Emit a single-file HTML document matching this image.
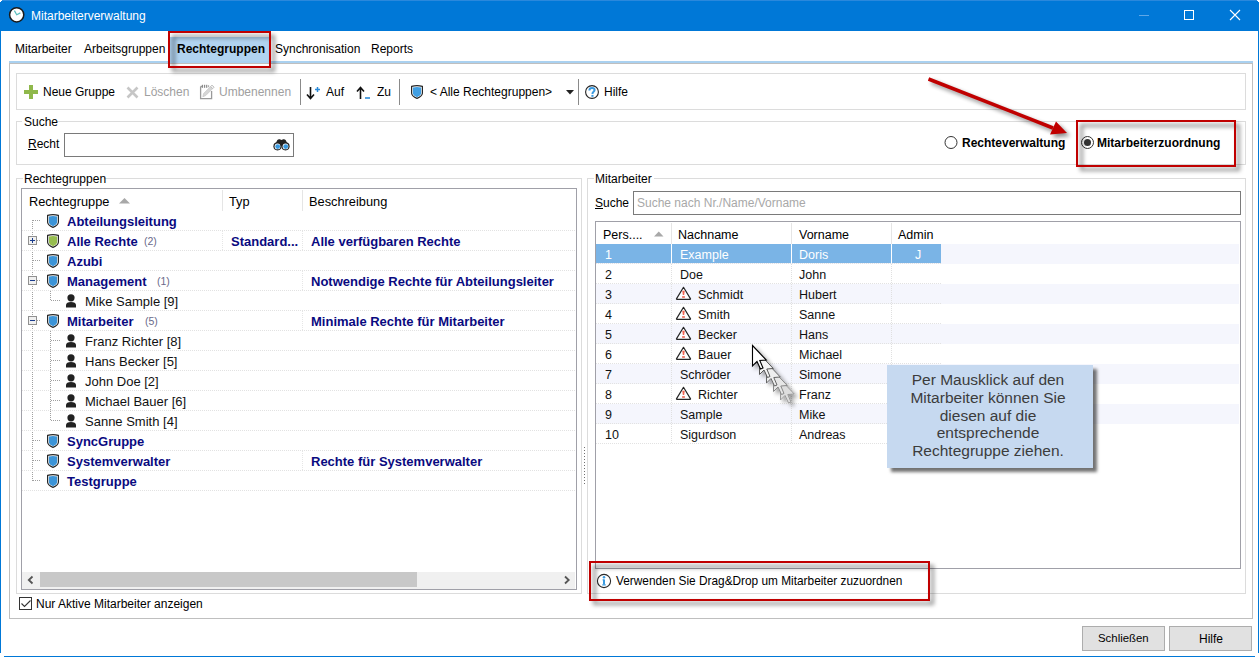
<!DOCTYPE html><html><head><meta charset="utf-8"><style>
html,body{margin:0;padding:0;width:1259px;height:657px;overflow:hidden;background:#fff;}
body{position:relative;font-family:"Liberation Sans",sans-serif;}
.a{position:absolute;box-sizing:border-box;}
.t{position:absolute;white-space:nowrap;line-height:1;}
svg.a{overflow:visible}
</style></head><body>
<div class="a" style="left:0px;top:0px;width:1259px;height:31px;background:#0078d7"></div>
<div class="a" style="left:0px;top:0px;width:1259px;height:1px;background:#2a88dc"></div>
<div class="a" style="left:0px;top:31px;width:1px;height:622px;background:#0078d7"></div>
<div class="a" style="left:1258px;top:0px;width:1px;height:653px;background:#0078d7"></div>
<div class="a" style="left:4px;top:656px;width:1251px;height:1px;background:#0078d7"></div>
<svg class="a" style="left:9px;top:7px;" width="17" height="17" viewBox="0 0 17 17"><circle cx="7.7" cy="7.8" r="7.1" fill="#fff" stroke="#1a1a1a" stroke-width="1.5"/><path d="M5.4 3.6 L7.7 7.8 L11.4 5.9" fill="none" stroke="#5bbfbf" stroke-width="1.2"/></svg>
<div class="a" style="left:0px;top:0px;width:2px;height:1px;background:#fff"></div>
<div class="a" style="left:0px;top:1px;width:1px;height:1px;background:#fff"></div>
<div class="a" style="left:1257px;top:0px;width:2px;height:1px;background:#fff"></div>
<div class="a" style="left:1258px;top:1px;width:1px;height:1px;background:#fff"></div>
<div class="t" style="left:31px;top:9.84px;font-size:12px;font-weight:normal;color:#fff;">Mitarbeiterverwaltung</div>
<div class="a" style="left:1139px;top:15px;width:10px;height:1px;background:#5ea7e8"></div>
<div class="a" style="left:1184px;top:10px;width:10px;height:10px;border:1px solid #fff"></div>
<svg class="a" style="left:1229px;top:9px;" width="12" height="12" viewBox="0 0 12 12"><path d="M1 1 L11 11 M11 1 L1 11" stroke="#fff" stroke-width="1.1"/></svg>
<div class="t" style="left:15px;top:42.84px;font-size:12px;font-weight:normal;color:#000;">Mitarbeiter</div>
<div class="t" style="left:84px;top:42.84px;font-size:12px;font-weight:normal;color:#000;">Arbeitsgruppen</div>
<div class="a" style="left:170px;top:37px;width:99px;height:26px;background:#b1d3f0"></div>
<div class="t" style="left:177px;top:42.84px;font-size:12px;font-weight:bold;color:#000;">Rechtegruppen</div>
<div class="t" style="left:275px;top:42.84px;font-size:12px;font-weight:normal;color:#000;">Synchronisation</div>
<div class="t" style="left:371px;top:42.84px;font-size:12px;font-weight:normal;color:#000;">Reports</div>
<div class="a" style="left:9px;top:61px;width:1244px;height:2px;background:#aad1f0"></div>
<div class="a" style="left:9px;top:63px;width:1244px;height:556px;border:1px solid #bfbfbf"></div>
<div class="a" style="left:16px;top:73px;width:1230px;height:37px;border:1px solid #dcdcdc"></div>
<svg class="a" style="left:24px;top:85px;" width="14" height="14" viewBox="0 0 14 14"><path d="M5 0h4v5h5v4h-5v5h-4v-5h-5v-4h5z" fill="#8fb84b"/></svg>
<div class="t" style="left:43px;top:85.84px;font-size:12px;font-weight:normal;color:#000;">Neue Gruppe</div>
<svg class="a" style="left:126px;top:86px;" width="13" height="13" viewBox="0 0 13 13"><path d="M1.5 1.5 L11.5 11.5 M11.5 1.5 L1.5 11.5" stroke="#c6c6c6" stroke-width="2.6"/></svg>
<div class="t" style="left:144px;top:85.84px;font-size:12px;font-weight:normal;color:#a0a0a0;">Löschen</div>
<svg class="a" style="left:199px;top:83px;" width="16" height="17" viewBox="0 0 16 17"><path d="M1.6 3.5 V15.6 H12.6 V8" fill="none" stroke="#9a9a9a" stroke-width="1.3"/><path d="M1.6 3.5 H3" stroke="#9a9a9a" stroke-width="1.3"/><rect x="2.9" y="1.8" width="1.2" height="3" fill="#8a8a8a"/><rect x="5" y="1.8" width="1.2" height="3" fill="#8a8a8a"/><rect x="7.1" y="1.8" width="1.2" height="3" fill="#8a8a8a"/><rect x="9.2" y="2.2" width="0.9" height="2" fill="#9a9a9a"/><path d="M3.8 13.8 L4.6 10.5 L11.5 3.6 L13.6 5.7 L6.7 12.6 Z" fill="#d6d6d6" stroke="#c4c4c4" stroke-width="0.7"/><path d="M11.5 3.6 L13 2.1 L15.1 4.2 L13.6 5.7 Z" fill="#f2f2f2" stroke="#b8b8b8" stroke-width="0.9"/></svg>
<div class="t" style="left:219px;top:85.84px;font-size:12px;font-weight:normal;color:#a0a0a0;">Umbenennen</div>
<div class="a" style="left:300px;top:79px;width:1px;height:26px;background:#8a8a8a"></div>
<svg class="a" style="left:306px;top:86px;" width="15" height="14" viewBox="0 0 15 14"><path d="M4.5 1 V12 M1 8.5 L4.5 12.5 L8 8.5" fill="none" stroke="#111" stroke-width="1.6"/><path d="M11.5 1 V6 M9 3.5 H14" stroke="#2a8ad8" stroke-width="1.5"/></svg>
<div class="t" style="left:326px;top:85.84px;font-size:12px;font-weight:normal;color:#000;">Auf</div>
<svg class="a" style="left:356px;top:86px;" width="15" height="14" viewBox="0 0 15 14"><path d="M4.5 13 V2 M1 5.5 L4.5 1.5 L8 5.5" fill="none" stroke="#111" stroke-width="1.6"/><path d="M9 12 H14" stroke="#2a8ad8" stroke-width="1.6"/></svg>
<div class="t" style="left:377px;top:85.84px;font-size:12px;font-weight:normal;color:#000;">Zu</div>
<div class="a" style="left:399px;top:79px;width:1px;height:26px;background:#8a8a8a"></div>
<svg class="a" style="left:411px;top:85px;" width="12" height="14" viewBox="0 0 12 14"><path d="M0.6 1.4 Q6 0 11.4 1.4 V8.3 Q11.2 11.3 6 13.4 Q0.8 11.3 0.6 8.3 Z" fill="#fff" stroke="#262626" stroke-width="1.2"/><path d="M1.9 2.6 Q6 1.6 10.1 2.6 V8.2 Q9.9 10.5 6 12.2 Q2.1 10.5 1.9 8.2 Z" fill="#409fe3"/></svg>
<div class="t" style="left:430px;top:85.84px;font-size:12px;font-weight:normal;color:#000;">&lt; Alle Rechtegruppen&gt;</div>
<svg class="a" style="left:566px;top:90px;" width="8" height="5" viewBox="0 0 8 5"><path d="M0 0 H8 L4 4.5 Z" fill="#222"/></svg>
<div class="a" style="left:578px;top:79px;width:1px;height:26px;background:#8a8a8a"></div>
<svg class="a" style="left:585px;top:85px;" width="14" height="14" viewBox="0 0 14 14"><circle cx="7" cy="7" r="6.4" fill="#fff" stroke="#222" stroke-width="1.1"/><path d="M4.4 5.4 C4.4 3.6 5.6 3 7 3 C8.5 3 9.6 3.9 9.6 5.1 C9.6 6.6 7.5 6.9 7.5 8.4 V8.9" fill="none" stroke="#3a9ae0" stroke-width="2"/><rect x="6.4" y="9.9" width="2.1" height="1.9" fill="#3a9ae0"/></svg>
<div class="t" style="left:604px;top:85.84px;font-size:12px;font-weight:normal;color:#000;">Hilfe</div>
<div class="a" style="left:16px;top:121px;width:1230px;height:44px;border:1px solid #dcdcdc"></div>
<div class="a" style="left:22px;top:118px;width:35px;height:8px;background:#fff"></div>
<div class="t" style="left:24px;top:115.84px;font-size:12px;font-weight:normal;color:#000;">Suche</div>
<div class="t" style="left:28px;top:137.84px;font-size:12px;font-weight:normal;color:#000;"><u>R</u>echt</div>
<div class="a" style="left:64px;top:133px;width:230px;height:24px;border:1px solid #7a7a7a"></div>
<svg class="a" style="left:273px;top:138px;" width="17" height="13" viewBox="0 0 17 13"><path d="M1.5 8 L4.2 2.2 Q5.2 0.9 6.8 1.3 L8.5 1.9 L10.2 1.3 Q11.8 0.9 12.8 2.2 L15.5 8 Z" fill="#222"/><circle cx="4.5" cy="8.3" r="4.1" fill="#222"/><circle cx="12.5" cy="8.3" r="4.1" fill="#222"/><circle cx="4.5" cy="8.4" r="2.9" fill="#fff"/><circle cx="12.5" cy="8.4" r="2.9" fill="#fff"/><circle cx="4.7" cy="8.6" r="2.4" fill="#3a9ae0"/><circle cx="12.7" cy="8.6" r="2.4" fill="#3a9ae0"/></svg>
<svg class="a" style="left:944px;top:136px;" width="14" height="14" viewBox="0 0 14 14"><circle cx="7" cy="6.5" r="6" fill="#fff" stroke="#333" stroke-width="1"/></svg>
<div class="t" style="left:962px;top:136.84px;font-size:12px;font-weight:bold;color:#000;">Rechteverwaltung</div>
<svg class="a" style="left:1081px;top:136px;" width="14" height="14" viewBox="0 0 14 14"><circle cx="6.5" cy="6.5" r="6" fill="#fff" stroke="#333" stroke-width="1"/><circle cx="6.5" cy="6.5" r="3.5" fill="#333"/></svg>
<div class="t" style="left:1097px;top:136.84px;font-size:12px;font-weight:bold;color:#000;">Mitarbeiterzuordnung</div>
<div class="a" style="left:16px;top:178px;width:566px;height:416px;border:1px solid #dcdcdc"></div>
<div class="a" style="left:23px;top:172px;width:81px;height:10px;background:#fff"></div>
<div class="t" style="left:24px;top:172.84px;font-size:12px;font-weight:normal;color:#000;">Rechtegruppen</div>
<div class="a" style="left:21px;top:188px;width:556px;height:402px;border:1px solid #a0a0a8"></div>
<div class="t" style="left:29px;top:196.16px;font-size:12.8px;font-weight:normal;color:#000;">Rechtegruppe</div>
<svg class="a" style="left:119px;top:198px;" width="12" height="6" viewBox="0 0 12 6"><path d="M0 5.5 L5.5 0 L11 5.5 Z" fill="#a8a8a8"/></svg>
<div class="a" style="left:222px;top:190px;width:1px;height:21px;background:#e5e5e5"></div>
<div class="t" style="left:229px;top:196.16px;font-size:12.8px;font-weight:normal;color:#000;">Typ</div>
<div class="a" style="left:302px;top:190px;width:1px;height:21px;background:#e5e5e5"></div>
<div class="t" style="left:309px;top:196.16px;font-size:12.8px;font-weight:normal;color:#000;">Beschreibung</div>
<div class="a" style="left:32px;top:220px;width:1px;height:261px;background-image:linear-gradient(to bottom,#a0a0a0 50%,transparent 50%);background-size:1px 2px;"></div>
<div class="a" style="left:50px;top:310px;width:1px;height:1px;"></div>
<div class="a" style="left:50px;top:291px;width:1px;height:10px;background-image:linear-gradient(to bottom,#a0a0a0 50%,transparent 50%);background-size:1px 2px;"></div>
<div class="a" style="left:50px;top:331px;width:1px;height:90px;background-image:linear-gradient(to bottom,#a0a0a0 50%,transparent 50%);background-size:1px 2px;"></div>
<div class="a" style="left:22px;top:230px;width:554px;height:1px;background-image:linear-gradient(to right,#e2e2e2 50%,transparent 50%);background-size:2px 1px;"></div>
<div class="a" style="left:33px;top:220px;width:8px;height:1px;background-image:linear-gradient(to right,#a0a0a0 50%,transparent 50%);background-size:2px 1px;"></div>
<svg class="a" style="left:47px;top:214px;" width="12" height="14" viewBox="0 0 12 14"><path d="M0.6 1.4 Q6 0 11.4 1.4 V8.3 Q11.2 11.3 6 13.4 Q0.8 11.3 0.6 8.3 Z" fill="#fff" stroke="#262626" stroke-width="1.2"/><path d="M1.9 2.6 Q6 1.6 10.1 2.6 V8.2 Q9.9 10.5 6 12.2 Q2.1 10.5 1.9 8.2 Z" fill="#3d95d8"/></svg>
<div class="t" style="left:67px;top:215.00px;font-size:13px;font-weight:bold;color:#0a0a80;">Abteilungsleitung</div>
<div class="a" style="left:22px;top:250px;width:554px;height:1px;background-image:linear-gradient(to right,#e2e2e2 50%,transparent 50%);background-size:2px 1px;"></div>
<div class="a" style="left:33px;top:240px;width:8px;height:1px;background-image:linear-gradient(to right,#a0a0a0 50%,transparent 50%);background-size:2px 1px;"></div>
<svg class="a" style="left:47px;top:234px;" width="12" height="14" viewBox="0 0 12 14"><path d="M0.6 1.4 Q6 0 11.4 1.4 V8.3 Q11.2 11.3 6 13.4 Q0.8 11.3 0.6 8.3 Z" fill="#fff" stroke="#262626" stroke-width="1.2"/><path d="M1.9 2.6 Q6 1.6 10.1 2.6 V8.2 Q9.9 10.5 6 12.2 Q2.1 10.5 1.9 8.2 Z" fill="#97bd4f"/></svg>
<div class="t" style="left:67px;top:235.00px;font-size:13px;font-weight:bold;color:#0a0a80;">Alle Rechte</div>
<svg class="a" style="left:28px;top:236px;" width="9" height="9" viewBox="0 0 9 9"><rect x="0.5" y="0.5" width="8" height="8" fill="#f0f0f0" stroke="#909090"/><path d="M2 4.5 H7" stroke="#1a3c8c" stroke-width="1"/><path d="M4.5 2 V7" stroke="#1a3c8c" stroke-width="1"/></svg>
<div class="t" style="left:231px;top:235.00px;font-size:13px;font-weight:bold;color:#0a0a80;">Standard...</div>
<div class="t" style="left:311px;top:235.00px;font-size:13px;font-weight:bold;color:#0a0a80;">Alle verfügbaren Rechte</div>
<div class="a" style="left:222px;top:231px;width:1px;height:19px;background-image:linear-gradient(to bottom,#e6e6e6 50%,transparent 50%);background-size:1px 2px;"></div>
<div class="a" style="left:302px;top:231px;width:1px;height:19px;background-image:linear-gradient(to bottom,#e6e6e6 50%,transparent 50%);background-size:1px 2px;"></div>
<div class="a" style="left:22px;top:270px;width:554px;height:1px;background-image:linear-gradient(to right,#e2e2e2 50%,transparent 50%);background-size:2px 1px;"></div>
<div class="a" style="left:33px;top:260px;width:8px;height:1px;background-image:linear-gradient(to right,#a0a0a0 50%,transparent 50%);background-size:2px 1px;"></div>
<svg class="a" style="left:47px;top:254px;" width="12" height="14" viewBox="0 0 12 14"><path d="M0.6 1.4 Q6 0 11.4 1.4 V8.3 Q11.2 11.3 6 13.4 Q0.8 11.3 0.6 8.3 Z" fill="#fff" stroke="#262626" stroke-width="1.2"/><path d="M1.9 2.6 Q6 1.6 10.1 2.6 V8.2 Q9.9 10.5 6 12.2 Q2.1 10.5 1.9 8.2 Z" fill="#3d95d8"/></svg>
<div class="t" style="left:67px;top:255.00px;font-size:13px;font-weight:bold;color:#0a0a80;">Azubi</div>
<div class="a" style="left:22px;top:290px;width:554px;height:1px;background-image:linear-gradient(to right,#e2e2e2 50%,transparent 50%);background-size:2px 1px;"></div>
<div class="a" style="left:33px;top:280px;width:8px;height:1px;background-image:linear-gradient(to right,#a0a0a0 50%,transparent 50%);background-size:2px 1px;"></div>
<svg class="a" style="left:47px;top:274px;" width="12" height="14" viewBox="0 0 12 14"><path d="M0.6 1.4 Q6 0 11.4 1.4 V8.3 Q11.2 11.3 6 13.4 Q0.8 11.3 0.6 8.3 Z" fill="#fff" stroke="#262626" stroke-width="1.2"/><path d="M1.9 2.6 Q6 1.6 10.1 2.6 V8.2 Q9.9 10.5 6 12.2 Q2.1 10.5 1.9 8.2 Z" fill="#3d95d8"/></svg>
<div class="t" style="left:67px;top:275.00px;font-size:13px;font-weight:bold;color:#0a0a80;">Management</div>
<svg class="a" style="left:28px;top:276px;" width="9" height="9" viewBox="0 0 9 9"><rect x="0.5" y="0.5" width="8" height="8" fill="#f0f0f0" stroke="#909090"/><path d="M2 4.5 H7" stroke="#1a3c8c" stroke-width="1"/></svg>
<div class="t" style="left:311px;top:275.00px;font-size:13px;font-weight:bold;color:#0a0a80;">Notwendige Rechte für Abteilungsleiter</div>
<div class="a" style="left:302px;top:271px;width:1px;height:19px;background-image:linear-gradient(to bottom,#e6e6e6 50%,transparent 50%);background-size:1px 2px;"></div>
<div class="a" style="left:22px;top:310px;width:554px;height:1px;background-image:linear-gradient(to right,#e2e2e2 50%,transparent 50%);background-size:2px 1px;"></div>
<div class="a" style="left:51px;top:300px;width:9px;height:1px;background-image:linear-gradient(to right,#a0a0a0 50%,transparent 50%);background-size:2px 1px;"></div>
<svg class="a" style="left:66px;top:294px;" width="10" height="14" viewBox="0 0 10 14"><circle cx="5" cy="3.8" r="3.6" fill="#222"/><path d="M0 13.5 V11 C0 9 2 8 5 8 C8 8 10 9 10 11 V13.5 Z" fill="#222"/></svg>
<div class="t" style="left:85px;top:295.00px;font-size:13px;font-weight:normal;color:#111;">Mike Sample [9]</div>
<div class="a" style="left:22px;top:330px;width:554px;height:1px;background-image:linear-gradient(to right,#e2e2e2 50%,transparent 50%);background-size:2px 1px;"></div>
<div class="a" style="left:33px;top:320px;width:8px;height:1px;background-image:linear-gradient(to right,#a0a0a0 50%,transparent 50%);background-size:2px 1px;"></div>
<svg class="a" style="left:47px;top:314px;" width="12" height="14" viewBox="0 0 12 14"><path d="M0.6 1.4 Q6 0 11.4 1.4 V8.3 Q11.2 11.3 6 13.4 Q0.8 11.3 0.6 8.3 Z" fill="#fff" stroke="#262626" stroke-width="1.2"/><path d="M1.9 2.6 Q6 1.6 10.1 2.6 V8.2 Q9.9 10.5 6 12.2 Q2.1 10.5 1.9 8.2 Z" fill="#3d95d8"/></svg>
<div class="t" style="left:67px;top:315.00px;font-size:13px;font-weight:bold;color:#0a0a80;">Mitarbeiter</div>
<svg class="a" style="left:28px;top:316px;" width="9" height="9" viewBox="0 0 9 9"><rect x="0.5" y="0.5" width="8" height="8" fill="#f0f0f0" stroke="#909090"/><path d="M2 4.5 H7" stroke="#1a3c8c" stroke-width="1"/></svg>
<div class="t" style="left:311px;top:315.00px;font-size:13px;font-weight:bold;color:#0a0a80;">Minimale Rechte für Mitarbeiter</div>
<div class="a" style="left:302px;top:311px;width:1px;height:19px;background-image:linear-gradient(to bottom,#e6e6e6 50%,transparent 50%);background-size:1px 2px;"></div>
<div class="a" style="left:22px;top:350px;width:554px;height:1px;background-image:linear-gradient(to right,#e2e2e2 50%,transparent 50%);background-size:2px 1px;"></div>
<div class="a" style="left:51px;top:340px;width:9px;height:1px;background-image:linear-gradient(to right,#a0a0a0 50%,transparent 50%);background-size:2px 1px;"></div>
<svg class="a" style="left:66px;top:334px;" width="10" height="14" viewBox="0 0 10 14"><circle cx="5" cy="3.8" r="3.6" fill="#222"/><path d="M0 13.5 V11 C0 9 2 8 5 8 C8 8 10 9 10 11 V13.5 Z" fill="#222"/></svg>
<div class="t" style="left:85px;top:335.00px;font-size:13px;font-weight:normal;color:#111;">Franz Richter [8]</div>
<div class="a" style="left:22px;top:370px;width:554px;height:1px;background-image:linear-gradient(to right,#e2e2e2 50%,transparent 50%);background-size:2px 1px;"></div>
<div class="a" style="left:51px;top:360px;width:9px;height:1px;background-image:linear-gradient(to right,#a0a0a0 50%,transparent 50%);background-size:2px 1px;"></div>
<svg class="a" style="left:66px;top:354px;" width="10" height="14" viewBox="0 0 10 14"><circle cx="5" cy="3.8" r="3.6" fill="#222"/><path d="M0 13.5 V11 C0 9 2 8 5 8 C8 8 10 9 10 11 V13.5 Z" fill="#222"/></svg>
<div class="t" style="left:85px;top:355.00px;font-size:13px;font-weight:normal;color:#111;">Hans Becker [5]</div>
<div class="a" style="left:22px;top:390px;width:554px;height:1px;background-image:linear-gradient(to right,#e2e2e2 50%,transparent 50%);background-size:2px 1px;"></div>
<div class="a" style="left:51px;top:380px;width:9px;height:1px;background-image:linear-gradient(to right,#a0a0a0 50%,transparent 50%);background-size:2px 1px;"></div>
<svg class="a" style="left:66px;top:374px;" width="10" height="14" viewBox="0 0 10 14"><circle cx="5" cy="3.8" r="3.6" fill="#222"/><path d="M0 13.5 V11 C0 9 2 8 5 8 C8 8 10 9 10 11 V13.5 Z" fill="#222"/></svg>
<div class="t" style="left:85px;top:375.00px;font-size:13px;font-weight:normal;color:#111;">John Doe [2]</div>
<div class="a" style="left:22px;top:410px;width:554px;height:1px;background-image:linear-gradient(to right,#e2e2e2 50%,transparent 50%);background-size:2px 1px;"></div>
<div class="a" style="left:51px;top:400px;width:9px;height:1px;background-image:linear-gradient(to right,#a0a0a0 50%,transparent 50%);background-size:2px 1px;"></div>
<svg class="a" style="left:66px;top:394px;" width="10" height="14" viewBox="0 0 10 14"><circle cx="5" cy="3.8" r="3.6" fill="#222"/><path d="M0 13.5 V11 C0 9 2 8 5 8 C8 8 10 9 10 11 V13.5 Z" fill="#222"/></svg>
<div class="t" style="left:85px;top:395.00px;font-size:13px;font-weight:normal;color:#111;">Michael Bauer [6]</div>
<div class="a" style="left:22px;top:430px;width:554px;height:1px;background-image:linear-gradient(to right,#e2e2e2 50%,transparent 50%);background-size:2px 1px;"></div>
<div class="a" style="left:51px;top:420px;width:9px;height:1px;background-image:linear-gradient(to right,#a0a0a0 50%,transparent 50%);background-size:2px 1px;"></div>
<svg class="a" style="left:66px;top:414px;" width="10" height="14" viewBox="0 0 10 14"><circle cx="5" cy="3.8" r="3.6" fill="#222"/><path d="M0 13.5 V11 C0 9 2 8 5 8 C8 8 10 9 10 11 V13.5 Z" fill="#222"/></svg>
<div class="t" style="left:85px;top:415.00px;font-size:13px;font-weight:normal;color:#111;">Sanne Smith [4]</div>
<div class="a" style="left:22px;top:450px;width:554px;height:1px;background-image:linear-gradient(to right,#e2e2e2 50%,transparent 50%);background-size:2px 1px;"></div>
<div class="a" style="left:33px;top:440px;width:8px;height:1px;background-image:linear-gradient(to right,#a0a0a0 50%,transparent 50%);background-size:2px 1px;"></div>
<svg class="a" style="left:47px;top:434px;" width="12" height="14" viewBox="0 0 12 14"><path d="M0.6 1.4 Q6 0 11.4 1.4 V8.3 Q11.2 11.3 6 13.4 Q0.8 11.3 0.6 8.3 Z" fill="#fff" stroke="#262626" stroke-width="1.2"/><path d="M1.9 2.6 Q6 1.6 10.1 2.6 V8.2 Q9.9 10.5 6 12.2 Q2.1 10.5 1.9 8.2 Z" fill="#3d95d8"/></svg>
<div class="t" style="left:67px;top:435.00px;font-size:13px;font-weight:bold;color:#0a0a80;">SyncGruppe</div>
<div class="a" style="left:22px;top:470px;width:554px;height:1px;background-image:linear-gradient(to right,#e2e2e2 50%,transparent 50%);background-size:2px 1px;"></div>
<div class="a" style="left:33px;top:460px;width:8px;height:1px;background-image:linear-gradient(to right,#a0a0a0 50%,transparent 50%);background-size:2px 1px;"></div>
<svg class="a" style="left:47px;top:454px;" width="12" height="14" viewBox="0 0 12 14"><path d="M0.6 1.4 Q6 0 11.4 1.4 V8.3 Q11.2 11.3 6 13.4 Q0.8 11.3 0.6 8.3 Z" fill="#fff" stroke="#262626" stroke-width="1.2"/><path d="M1.9 2.6 Q6 1.6 10.1 2.6 V8.2 Q9.9 10.5 6 12.2 Q2.1 10.5 1.9 8.2 Z" fill="#3d95d8"/></svg>
<div class="t" style="left:67px;top:455.00px;font-size:13px;font-weight:bold;color:#0a0a80;">Systemverwalter</div>
<div class="t" style="left:311px;top:455.00px;font-size:13px;font-weight:bold;color:#0a0a80;">Rechte für Systemverwalter</div>
<div class="a" style="left:302px;top:451px;width:1px;height:19px;background-image:linear-gradient(to bottom,#e6e6e6 50%,transparent 50%);background-size:1px 2px;"></div>
<div class="a" style="left:22px;top:490px;width:554px;height:1px;background-image:linear-gradient(to right,#e2e2e2 50%,transparent 50%);background-size:2px 1px;"></div>
<div class="a" style="left:33px;top:480px;width:8px;height:1px;background-image:linear-gradient(to right,#a0a0a0 50%,transparent 50%);background-size:2px 1px;"></div>
<svg class="a" style="left:47px;top:474px;" width="12" height="14" viewBox="0 0 12 14"><path d="M0.6 1.4 Q6 0 11.4 1.4 V8.3 Q11.2 11.3 6 13.4 Q0.8 11.3 0.6 8.3 Z" fill="#fff" stroke="#262626" stroke-width="1.2"/><path d="M1.9 2.6 Q6 1.6 10.1 2.6 V8.2 Q9.9 10.5 6 12.2 Q2.1 10.5 1.9 8.2 Z" fill="#3d95d8"/></svg>
<div class="t" style="left:67px;top:475.00px;font-size:13px;font-weight:bold;color:#0a0a80;">Testgruppe</div>
<div class="t" style="left:144px;top:236.11px;font-size:10.5px;font-weight:normal;color:#6a6a8a;">(2)</div>
<div class="t" style="left:157px;top:276.11px;font-size:10.5px;font-weight:normal;color:#6a6a8a;">(1)</div>
<div class="t" style="left:145px;top:316.11px;font-size:10.5px;font-weight:normal;color:#6a6a8a;">(5)</div>
<div class="a" style="left:22px;top:572px;width:553px;height:17px;background:#f0f0f0"></div>
<div class="a" style="left:40px;top:572px;width:377px;height:15px;background:#c8c8c8"></div>
<svg class="a" style="left:27px;top:576px;" width="8" height="8" viewBox="0 0 8 8"><path d="M5.5 0.5 L1.8 4 L5.5 7.5" fill="none" stroke="#555" stroke-width="1.8"/></svg>
<svg class="a" style="left:563px;top:576px;" width="8" height="8" viewBox="0 0 8 8"><path d="M2 0.5 L5.7 4 L2 7.5" fill="none" stroke="#555" stroke-width="1.8"/></svg>
<div class="a" style="left:584px;top:447px;width:1px;height:1px;background:#707070"></div>
<div class="a" style="left:584px;top:450px;width:1px;height:1px;background:#707070"></div>
<div class="a" style="left:584px;top:453px;width:1px;height:1px;background:#707070"></div>
<div class="a" style="left:584px;top:456px;width:1px;height:1px;background:#707070"></div>
<div class="a" style="left:584px;top:459px;width:1px;height:1px;background:#707070"></div>
<div class="a" style="left:584px;top:462px;width:1px;height:1px;background:#707070"></div>
<div class="a" style="left:584px;top:465px;width:1px;height:1px;background:#707070"></div>
<div class="a" style="left:584px;top:468px;width:1px;height:1px;background:#707070"></div>
<div class="a" style="left:584px;top:471px;width:1px;height:1px;background:#707070"></div>
<div class="a" style="left:584px;top:474px;width:1px;height:1px;background:#707070"></div>
<div class="a" style="left:584px;top:477px;width:1px;height:1px;background:#707070"></div>
<div class="a" style="left:584px;top:480px;width:1px;height:1px;background:#707070"></div>
<div class="a" style="left:584px;top:483px;width:1px;height:1px;background:#707070"></div>
<div class="a" style="left:19px;top:597px;width:13px;height:13px;border:1px solid #333;background:#fff"></div>
<svg class="a" style="left:21px;top:600px;" width="10" height="8" viewBox="0 0 10 8"><path d="M0.5 3.5 L3.5 6.5 L9.5 0.5" fill="none" stroke="#333" stroke-width="1.1"/></svg>
<div class="t" style="left:36px;top:597.84px;font-size:12px;font-weight:normal;color:#000;">Nur Aktive Mitarbeiter anzeigen</div>
<div class="a" style="left:587px;top:178px;width:659px;height:416px;border:1px solid #dcdcdc"></div>
<div class="a" style="left:594px;top:172px;width:60px;height:10px;background:#fff"></div>
<div class="t" style="left:595px;top:172.84px;font-size:12px;font-weight:normal;color:#000;">Mitarbeiter</div>
<div class="t" style="left:595px;top:196.84px;font-size:12px;font-weight:normal;color:#000;"><u>S</u>uche</div>
<div class="a" style="left:633px;top:191px;width:608px;height:24px;border:1px solid #7a7a7a"></div>
<div class="t" style="left:637px;top:196.84px;font-size:12px;font-weight:normal;color:#a8a8a8;">Suche nach Nr./Name/Vorname</div>
<div class="a" style="left:595px;top:221px;width:646px;height:348px;border:1px solid #a0a0a8"></div>
<div class="t" style="left:603px;top:229.42px;font-size:12.5px;font-weight:normal;color:#000;">Pers....</div>
<svg class="a" style="left:654px;top:231px;" width="10" height="6" viewBox="0 0 10 6"><path d="M0 5.5 L4.75 0.5 L9.5 5.5 Z" fill="#a8a8a8"/></svg>
<div class="a" style="left:671px;top:223px;width:1px;height:21px;background:#e5e5e5"></div>
<div class="t" style="left:678px;top:229.42px;font-size:12.5px;font-weight:normal;color:#000;">Nachname</div>
<div class="a" style="left:791px;top:223px;width:1px;height:21px;background:#e5e5e5"></div>
<div class="t" style="left:799px;top:229.42px;font-size:12.5px;font-weight:normal;color:#000;">Vorname</div>
<div class="a" style="left:891px;top:223px;width:1px;height:21px;background:#e5e5e5"></div>
<div class="t" style="left:898px;top:229.42px;font-size:12.5px;font-weight:normal;color:#000;">Admin</div>
<div class="a" style="left:596px;top:244px;width:643px;height:20px;background:#f5f6fd"></div>
<div class="a" style="left:596px;top:244px;width:345px;height:19px;background:#7ab4e6"></div>
<div class="a" style="left:596px;top:263px;width:345px;height:1px;background-image:linear-gradient(to right,#e2e2e2 50%,transparent 50%);background-size:2px 1px;"></div>
<div class="a" style="left:671px;top:244px;width:1px;height:19px;background:#fff"></div>
<div class="a" style="left:791px;top:244px;width:1px;height:19px;background:#fff"></div>
<div class="a" style="left:891px;top:244px;width:1px;height:19px;background:#fff"></div>
<div class="t" style="left:605px;top:249.42px;font-size:12.5px;font-weight:normal;color:#fff;">1</div>
<div class="t" style="left:680px;top:249.42px;font-size:12.5px;font-weight:normal;color:#fff;">Example</div>
<div class="t" style="left:799px;top:249.42px;font-size:12.5px;font-weight:normal;color:#fff;">Doris</div>
<div class="t" style="left:915px;top:249.42px;font-size:12.5px;font-weight:normal;color:#fff;">J</div>
<div class="a" style="left:596px;top:283px;width:345px;height:1px;background-image:linear-gradient(to right,#e2e2e2 50%,transparent 50%);background-size:2px 1px;"></div>
<div class="a" style="left:671px;top:264px;width:1px;height:19px;background-image:linear-gradient(to bottom,#e0e0e0 50%,transparent 50%);background-size:1px 2px;"></div>
<div class="a" style="left:791px;top:264px;width:1px;height:19px;background-image:linear-gradient(to bottom,#e0e0e0 50%,transparent 50%);background-size:1px 2px;"></div>
<div class="a" style="left:891px;top:264px;width:1px;height:19px;background-image:linear-gradient(to bottom,#e0e0e0 50%,transparent 50%);background-size:1px 2px;"></div>
<div class="t" style="left:605px;top:269.42px;font-size:12.5px;font-weight:normal;color:#111;">2</div>
<div class="t" style="left:680px;top:269.42px;font-size:12.5px;font-weight:normal;color:#111;">Doe</div>
<div class="t" style="left:799px;top:269.42px;font-size:12.5px;font-weight:normal;color:#111;">John</div>
<div class="a" style="left:596px;top:284px;width:643px;height:20px;background:#f5f6fd"></div>
<div class="a" style="left:596px;top:303px;width:345px;height:1px;background-image:linear-gradient(to right,#e2e2e2 50%,transparent 50%);background-size:2px 1px;"></div>
<div class="a" style="left:671px;top:284px;width:1px;height:19px;background-image:linear-gradient(to bottom,#e0e0e0 50%,transparent 50%);background-size:1px 2px;"></div>
<div class="a" style="left:791px;top:284px;width:1px;height:19px;background-image:linear-gradient(to bottom,#e0e0e0 50%,transparent 50%);background-size:1px 2px;"></div>
<div class="a" style="left:891px;top:284px;width:1px;height:19px;background-image:linear-gradient(to bottom,#e0e0e0 50%,transparent 50%);background-size:1px 2px;"></div>
<div class="t" style="left:605px;top:289.42px;font-size:12.5px;font-weight:normal;color:#111;">3</div>
<svg class="a" style="left:675px;top:286px;" width="17" height="15" viewBox="0 0 17 15"><path d="M8.5 1.3 L15.4 12.6 Q15.8 13.3 15 13.3 H2 Q1.2 13.3 1.6 12.6 Z" fill="#fff" stroke="#262626" stroke-width="1.2" stroke-linejoin="round"/><path d="M7.3 4.8 H9.7 L9.2 9 H7.8 Z" fill="#f26452"/><rect x="7.1" y="10.2" width="2.8" height="1.6" fill="#f26452"/></svg>
<div class="t" style="left:698px;top:289.42px;font-size:12.5px;font-weight:normal;color:#111;">Schmidt</div>
<div class="t" style="left:799px;top:289.42px;font-size:12.5px;font-weight:normal;color:#111;">Hubert</div>
<div class="a" style="left:596px;top:323px;width:345px;height:1px;background-image:linear-gradient(to right,#e2e2e2 50%,transparent 50%);background-size:2px 1px;"></div>
<div class="a" style="left:671px;top:304px;width:1px;height:19px;background-image:linear-gradient(to bottom,#e0e0e0 50%,transparent 50%);background-size:1px 2px;"></div>
<div class="a" style="left:791px;top:304px;width:1px;height:19px;background-image:linear-gradient(to bottom,#e0e0e0 50%,transparent 50%);background-size:1px 2px;"></div>
<div class="a" style="left:891px;top:304px;width:1px;height:19px;background-image:linear-gradient(to bottom,#e0e0e0 50%,transparent 50%);background-size:1px 2px;"></div>
<div class="t" style="left:605px;top:309.42px;font-size:12.5px;font-weight:normal;color:#111;">4</div>
<svg class="a" style="left:675px;top:306px;" width="17" height="15" viewBox="0 0 17 15"><path d="M8.5 1.3 L15.4 12.6 Q15.8 13.3 15 13.3 H2 Q1.2 13.3 1.6 12.6 Z" fill="#fff" stroke="#262626" stroke-width="1.2" stroke-linejoin="round"/><path d="M7.3 4.8 H9.7 L9.2 9 H7.8 Z" fill="#f26452"/><rect x="7.1" y="10.2" width="2.8" height="1.6" fill="#f26452"/></svg>
<div class="t" style="left:698px;top:309.42px;font-size:12.5px;font-weight:normal;color:#111;">Smith</div>
<div class="t" style="left:799px;top:309.42px;font-size:12.5px;font-weight:normal;color:#111;">Sanne</div>
<div class="a" style="left:596px;top:324px;width:643px;height:20px;background:#f5f6fd"></div>
<div class="a" style="left:596px;top:343px;width:345px;height:1px;background-image:linear-gradient(to right,#e2e2e2 50%,transparent 50%);background-size:2px 1px;"></div>
<div class="a" style="left:671px;top:324px;width:1px;height:19px;background-image:linear-gradient(to bottom,#e0e0e0 50%,transparent 50%);background-size:1px 2px;"></div>
<div class="a" style="left:791px;top:324px;width:1px;height:19px;background-image:linear-gradient(to bottom,#e0e0e0 50%,transparent 50%);background-size:1px 2px;"></div>
<div class="a" style="left:891px;top:324px;width:1px;height:19px;background-image:linear-gradient(to bottom,#e0e0e0 50%,transparent 50%);background-size:1px 2px;"></div>
<div class="t" style="left:605px;top:329.42px;font-size:12.5px;font-weight:normal;color:#111;">5</div>
<svg class="a" style="left:675px;top:326px;" width="17" height="15" viewBox="0 0 17 15"><path d="M8.5 1.3 L15.4 12.6 Q15.8 13.3 15 13.3 H2 Q1.2 13.3 1.6 12.6 Z" fill="#fff" stroke="#262626" stroke-width="1.2" stroke-linejoin="round"/><path d="M7.3 4.8 H9.7 L9.2 9 H7.8 Z" fill="#f26452"/><rect x="7.1" y="10.2" width="2.8" height="1.6" fill="#f26452"/></svg>
<div class="t" style="left:698px;top:329.42px;font-size:12.5px;font-weight:normal;color:#111;">Becker</div>
<div class="t" style="left:799px;top:329.42px;font-size:12.5px;font-weight:normal;color:#111;">Hans</div>
<div class="a" style="left:596px;top:363px;width:345px;height:1px;background-image:linear-gradient(to right,#e2e2e2 50%,transparent 50%);background-size:2px 1px;"></div>
<div class="a" style="left:671px;top:344px;width:1px;height:19px;background-image:linear-gradient(to bottom,#e0e0e0 50%,transparent 50%);background-size:1px 2px;"></div>
<div class="a" style="left:791px;top:344px;width:1px;height:19px;background-image:linear-gradient(to bottom,#e0e0e0 50%,transparent 50%);background-size:1px 2px;"></div>
<div class="a" style="left:891px;top:344px;width:1px;height:19px;background-image:linear-gradient(to bottom,#e0e0e0 50%,transparent 50%);background-size:1px 2px;"></div>
<div class="t" style="left:605px;top:349.42px;font-size:12.5px;font-weight:normal;color:#111;">6</div>
<svg class="a" style="left:675px;top:346px;" width="17" height="15" viewBox="0 0 17 15"><path d="M8.5 1.3 L15.4 12.6 Q15.8 13.3 15 13.3 H2 Q1.2 13.3 1.6 12.6 Z" fill="#fff" stroke="#262626" stroke-width="1.2" stroke-linejoin="round"/><path d="M7.3 4.8 H9.7 L9.2 9 H7.8 Z" fill="#f26452"/><rect x="7.1" y="10.2" width="2.8" height="1.6" fill="#f26452"/></svg>
<div class="t" style="left:698px;top:349.42px;font-size:12.5px;font-weight:normal;color:#111;">Bauer</div>
<div class="t" style="left:799px;top:349.42px;font-size:12.5px;font-weight:normal;color:#111;">Michael</div>
<div class="a" style="left:596px;top:364px;width:643px;height:20px;background:#f5f6fd"></div>
<div class="a" style="left:596px;top:383px;width:345px;height:1px;background-image:linear-gradient(to right,#e2e2e2 50%,transparent 50%);background-size:2px 1px;"></div>
<div class="a" style="left:671px;top:364px;width:1px;height:19px;background-image:linear-gradient(to bottom,#e0e0e0 50%,transparent 50%);background-size:1px 2px;"></div>
<div class="a" style="left:791px;top:364px;width:1px;height:19px;background-image:linear-gradient(to bottom,#e0e0e0 50%,transparent 50%);background-size:1px 2px;"></div>
<div class="a" style="left:891px;top:364px;width:1px;height:19px;background-image:linear-gradient(to bottom,#e0e0e0 50%,transparent 50%);background-size:1px 2px;"></div>
<div class="t" style="left:605px;top:369.42px;font-size:12.5px;font-weight:normal;color:#111;">7</div>
<div class="t" style="left:680px;top:369.42px;font-size:12.5px;font-weight:normal;color:#111;">Schröder</div>
<div class="t" style="left:799px;top:369.42px;font-size:12.5px;font-weight:normal;color:#111;">Simone</div>
<div class="a" style="left:596px;top:403px;width:345px;height:1px;background-image:linear-gradient(to right,#e2e2e2 50%,transparent 50%);background-size:2px 1px;"></div>
<div class="a" style="left:671px;top:384px;width:1px;height:19px;background-image:linear-gradient(to bottom,#e0e0e0 50%,transparent 50%);background-size:1px 2px;"></div>
<div class="a" style="left:791px;top:384px;width:1px;height:19px;background-image:linear-gradient(to bottom,#e0e0e0 50%,transparent 50%);background-size:1px 2px;"></div>
<div class="a" style="left:891px;top:384px;width:1px;height:19px;background-image:linear-gradient(to bottom,#e0e0e0 50%,transparent 50%);background-size:1px 2px;"></div>
<div class="t" style="left:605px;top:389.42px;font-size:12.5px;font-weight:normal;color:#111;">8</div>
<svg class="a" style="left:675px;top:386px;" width="17" height="15" viewBox="0 0 17 15"><path d="M8.5 1.3 L15.4 12.6 Q15.8 13.3 15 13.3 H2 Q1.2 13.3 1.6 12.6 Z" fill="#fff" stroke="#262626" stroke-width="1.2" stroke-linejoin="round"/><path d="M7.3 4.8 H9.7 L9.2 9 H7.8 Z" fill="#f26452"/><rect x="7.1" y="10.2" width="2.8" height="1.6" fill="#f26452"/></svg>
<div class="t" style="left:698px;top:389.42px;font-size:12.5px;font-weight:normal;color:#111;">Richter</div>
<div class="t" style="left:799px;top:389.42px;font-size:12.5px;font-weight:normal;color:#111;">Franz</div>
<div class="a" style="left:596px;top:404px;width:643px;height:20px;background:#f5f6fd"></div>
<div class="a" style="left:596px;top:423px;width:345px;height:1px;background-image:linear-gradient(to right,#e2e2e2 50%,transparent 50%);background-size:2px 1px;"></div>
<div class="a" style="left:671px;top:404px;width:1px;height:19px;background-image:linear-gradient(to bottom,#e0e0e0 50%,transparent 50%);background-size:1px 2px;"></div>
<div class="a" style="left:791px;top:404px;width:1px;height:19px;background-image:linear-gradient(to bottom,#e0e0e0 50%,transparent 50%);background-size:1px 2px;"></div>
<div class="a" style="left:891px;top:404px;width:1px;height:19px;background-image:linear-gradient(to bottom,#e0e0e0 50%,transparent 50%);background-size:1px 2px;"></div>
<div class="t" style="left:605px;top:409.42px;font-size:12.5px;font-weight:normal;color:#111;">9</div>
<div class="t" style="left:680px;top:409.42px;font-size:12.5px;font-weight:normal;color:#111;">Sample</div>
<div class="t" style="left:799px;top:409.42px;font-size:12.5px;font-weight:normal;color:#111;">Mike</div>
<div class="a" style="left:596px;top:443px;width:345px;height:1px;background-image:linear-gradient(to right,#e2e2e2 50%,transparent 50%);background-size:2px 1px;"></div>
<div class="a" style="left:671px;top:424px;width:1px;height:19px;background-image:linear-gradient(to bottom,#e0e0e0 50%,transparent 50%);background-size:1px 2px;"></div>
<div class="a" style="left:791px;top:424px;width:1px;height:19px;background-image:linear-gradient(to bottom,#e0e0e0 50%,transparent 50%);background-size:1px 2px;"></div>
<div class="a" style="left:891px;top:424px;width:1px;height:19px;background-image:linear-gradient(to bottom,#e0e0e0 50%,transparent 50%);background-size:1px 2px;"></div>
<div class="t" style="left:605px;top:429.42px;font-size:12.5px;font-weight:normal;color:#111;">10</div>
<div class="t" style="left:680px;top:429.42px;font-size:12.5px;font-weight:normal;color:#111;">Sigurdson</div>
<div class="t" style="left:799px;top:429.42px;font-size:12.5px;font-weight:normal;color:#111;">Andreas</div>
<svg class="a" style="left:596px;top:573px;" width="16" height="16" viewBox="0 0 16 16"><circle cx="8" cy="8" r="6.6" fill="#fff" stroke="#2a2a2a" stroke-width="1.1"/><path d="M8 6.8 V11.6" stroke="#3a9ae0" stroke-width="2"/><path d="M6.3 11.8 H9.7 M6.6 6.8 H8.6" stroke="#3a9ae0" stroke-width="1.2"/><circle cx="8" cy="4.3" r="1.25" fill="#3a9ae0"/></svg>
<div class="t" style="left:616px;top:575.97px;font-size:11.85px;font-weight:normal;color:#000;">Verwenden Sie Drag&amp;Drop um Mitarbeiter zuzuordnen</div>
<div class="a" style="left:1082px;top:626px;width:83px;height:25px;background:#e1e1e1;border:1px solid #adadad"></div>
<div class="t" style="left:1098px;top:633.35px;font-size:11.4px;font-weight:normal;color:#000;">Schließen</div>
<div class="a" style="left:1169px;top:626px;width:83px;height:25px;background:#e1e1e1;border:1px solid #adadad"></div>
<div class="t" style="left:1199px;top:632.84px;font-size:12px;font-weight:normal;color:#000;">Hilfe</div>
<div class="a" style="left:172px;top:35px;width:103px;height:37px;border:3px solid rgba(0,0,0,0.42);filter:blur(2px)"></div>
<div class="a" style="left:168px;top:31px;width:103px;height:37px;border:2px solid #c00000"></div>
<div class="a" style="left:1080px;top:124px;width:160px;height:47px;border:3px solid rgba(0,0,0,0.42);filter:blur(2px)"></div>
<div class="a" style="left:1076px;top:120px;width:160px;height:47px;border:2px solid #c00000"></div>
<div class="a" style="left:593px;top:565px;width:341px;height:40px;border:3px solid rgba(0,0,0,0.42);filter:blur(2px)"></div>
<div class="a" style="left:589px;top:561px;width:341px;height:40px;border:2px solid #c00000"></div>
<svg class="a" style="left:920px;top:70px;" width="160" height="80" viewBox="0 0 160 80"><defs><filter id="sh" x="-20%" y="-20%" width="150%" height="150%"><feGaussianBlur stdDeviation="2"/></filter></defs><g transform="translate(3,3)" filter="url(#sh)" opacity="0.45"><path d="M8.5 9 L133 58" stroke="#000" stroke-width="3.5"/><path d="M136 51.5 L130 64.5 L147 63 Z" fill="#000"/></g><path d="M8.5 9 L133 58" stroke="#c00000" stroke-width="3.5"/><path d="M136 51.5 L130 64.5 L147 63 Z" fill="#c00000"/></svg>
<div class="a" style="left:887px;top:365px;width:206px;height:103px;background:#c6d9f0;box-shadow:4px 4px 3px rgba(0,0,0,0.55)"></div>
<div class="t" style="left:885px;width:206px;text-align:center;top:371.88px;font-size:15.5px;color:#3c3c3c">Per Mausklick auf den</div>
<div class="t" style="left:885px;width:206px;text-align:center;top:389.73px;font-size:15.5px;color:#3c3c3c">Mitarbeiter können Sie</div>
<div class="t" style="left:885px;width:206px;text-align:center;top:407.58px;font-size:15.5px;color:#3c3c3c">diesen auf die</div>
<div class="t" style="left:885px;width:206px;text-align:center;top:425.43px;font-size:15.5px;color:#3c3c3c">entsprechende</div>
<div class="t" style="left:885px;width:206px;text-align:center;top:443.28px;font-size:15.5px;color:#3c3c3c">Rechtegruppe ziehen.</div>
<svg class="a" style="left:745px;top:340px;" width="70" height="80" viewBox="0 0 70 80"><defs><filter id="cs" x="-50%" y="-50%" width="200%" height="200%"><feGaussianBlur in="SourceAlpha" stdDeviation="2"/><feOffset dx="3" dy="3"/><feComponentTransfer><feFuncA type="linear" slope="0.4"/></feComponentTransfer><feMerge><feMergeNode/><feMergeNode in="SourceGraphic"/></feMerge></filter></defs><g filter="url(#cs)" transform="translate(7,5)"><path transform="translate(28,34.0)" d="M0.5 0.5 V21 L5 16.5 L8.5 24 L11 23 L7.8 15.5 L14.3 15 Z" fill="#dddddd" stroke="#999" stroke-width="1" stroke-linejoin="miter"/><path transform="translate(21,25.5)" d="M0.5 0.5 V21 L5 16.5 L8.5 24 L11 23 L7.8 15.5 L14.3 15 Z" fill="#e6e6e6" stroke="#888" stroke-width="1" stroke-linejoin="miter"/><path transform="translate(14,17.0)" d="M0.5 0.5 V21 L5 16.5 L8.5 24 L11 23 L7.8 15.5 L14.3 15 Z" fill="#eeeeee" stroke="#666" stroke-width="1" stroke-linejoin="miter"/><path transform="translate(7,8.5)" d="M0.5 0.5 V21 L5 16.5 L8.5 24 L11 23 L7.8 15.5 L14.3 15 Z" fill="#f4f4f4" stroke="#555" stroke-width="1" stroke-linejoin="miter"/><path d="M0.5 0.5 V21 L5 16.5 L8.5 24 L11 23 L7.8 15.5 L14.3 15 Z" fill="#fff" stroke="#000" stroke-width="1.1" stroke-linejoin="miter"/></g></svg>
</body></html>
